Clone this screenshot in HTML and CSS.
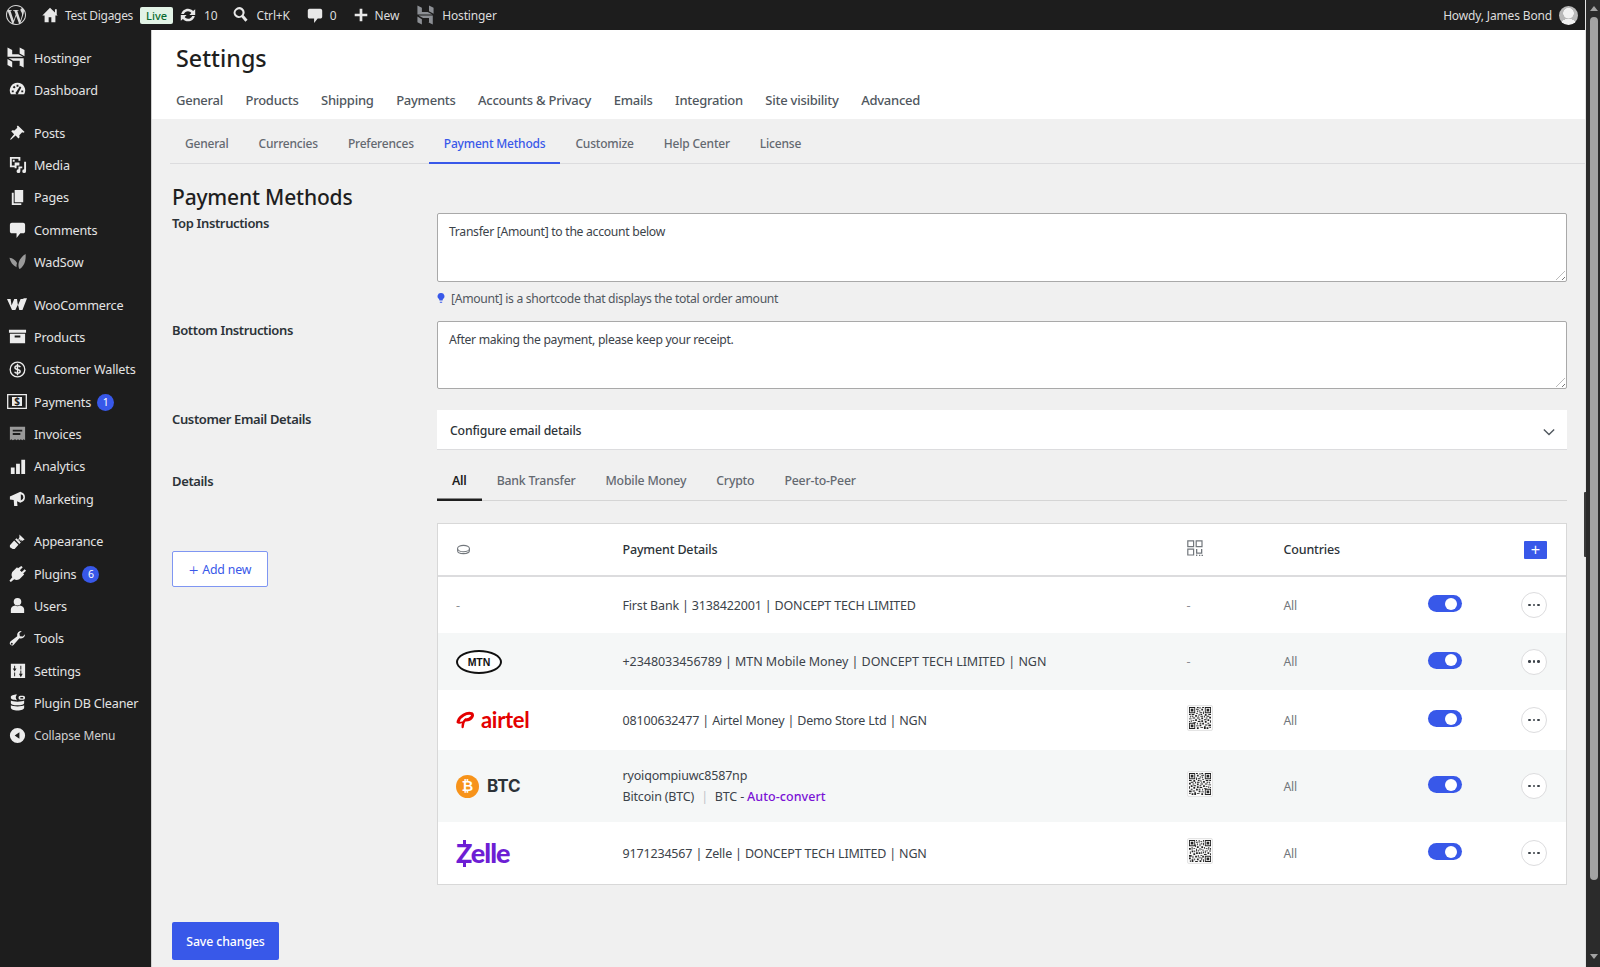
FILE: index.html
```html
<!DOCTYPE html>
<html lang="en">
<head>
    <meta charset="UTF-8">
    <meta name="viewport" content="width=device-width, initial-scale=1.0">
    <title>Settings</title>
    <link rel="stylesheet" href="styles.css">
</head>
<body>
    <svg class="defs" width="0" height="0">
        <symbol id="i-hostinger" viewBox="0 0 24 24"><path d="M16.415 0v7.16l5.785 3.384V2.949L16.415 0ZM1.8 0v11.237h18.815L14.89 8.09l-7.457-.003V2.949L1.8 0Zm14.615 21.05v-5.129l-7.457-.003c.008 0-5.785-3.144-5.785-3.144l18.027.001V24l-5.785-2.95ZM1.8 13.828v7.223l5.634 2.949v-6.78L1.8 13.828Z"/></symbol>
        <symbol id="i-qr" viewBox="0 0 25 25">
            <path fill-rule="evenodd" d="M0 0h7v7H0zM1 1v5h5V1zM2 2h3v3H2zM18 0h7v7h-7zM19 1v5h5V1zM20 2h3v3h-3zM0 18h7v7H0zM1 19v5h5v-5zM2 20h3v3H2z"/>
            <path d="M9 0h2v1H9zM12 0h1v2h-1zM15 0h2v1h-2zM8 2h3v1H8zM14 2h2v2h-2zM9 4h1v2H9zM11 4h2v1h-2zM12 6h3v1h-3zM16 5h1v3h-1zM8 7h2v1H8zM0 8h2v1H0zM3 8h3v1H3zM11 8h1v2h-1zM13 8h2v1h-2zM18 8h2v2h-2zM22 8h3v1h-3zM1 10h1v2H1zM3 10h2v1H3zM7 9h2v2H7zM10 10h1v1h-1zM13 10h3v1h-3zM17 10h1v2h-1zM20 10h3v1h-3zM4 12h3v1H4zM9 12h3v1H9zM14 12h2v2h-2zM19 12h2v1h-2zM23 11h2v2h-2zM0 13h3v1H0zM7 14h2v2H7zM11 14h2v1h-2zM17 14h3v1h-3zM21 14h2v2h-2zM2 15h1v2H2zM4 15h2v1H4zM10 16h3v1h-3zM14 15h2v2h-2zM18 16h2v2h-2zM24 15h1v3h-1zM0 16h1v1H0zM5 17h3v1H5zM9 18h1v2H9zM12 18h2v1h-2zM15 18h2v2h-2zM21 18h2v1h-2zM8 21h3v1H8zM12 20h2v2h-2zM18 20h3v1h-3zM22 20h3v2h-3zM9 23h2v2H9zM13 23h3v1h-3zM17 22h2v3h-2zM20 23h2v2h-2zM23 23h2v1h-2z"/>
        </symbol>
    </svg>

    <div class="window">
        <div class="content">
            <!-- admin bar -->
            <div class="adminbar">
                <div class="bar-left">
                    <svg class="ab-wp" viewBox="0 0 24 24"><path d="M21.469 6.825c.84 1.537 1.318 3.3 1.318 5.175 0 3.979-2.156 7.456-5.363 9.325l3.295-9.527c.615-1.54.82-2.771.82-3.864 0-.405-.026-.78-.07-1.11m-7.981.105c.647-.03 1.232-.105 1.232-.105.582-.075.514-.93-.067-.899 0 0-1.755.135-2.88.135-1.064 0-2.85-.15-2.85-.15-.585-.03-.661.855-.075.885 0 0 .54.061 1.125.09l1.68 4.605-2.37 7.08L5.354 6.9c.649-.03 1.234-.1 1.234-.1.585-.075.516-.93-.065-.896 0 0-1.746.138-2.874.138-.2 0-.438-.008-.69-.015C4.911 3.15 8.235 1.215 12 1.215c2.809 0 5.365 1.072 7.286 2.833-.046-.003-.091-.009-.141-.009-1.06 0-1.812.923-1.812 1.914 0 .89.513 1.643 1.06 2.531.411.72.89 1.643.89 2.977 0 .915-.354 1.994-.821 3.479l-1.075 3.585-3.9-11.61.001.014zM12 22.784c-1.059 0-2.081-.153-3.048-.437l3.237-9.406 3.315 9.087c.024.053.05.101.078.149-1.12.393-2.325.609-3.582.609M1.211 12c0-1.564.336-3.05.935-4.39L7.29 21.709C3.694 19.96 1.212 16.271 1.211 12M12 0C5.385 0 0 5.385 0 12s5.385 12 12 12 12-5.385 12-12S18.615 0 12 0"/></svg>
                    <svg class="ab-icon ab-home" viewBox="0 0 20 20"><path d="M15.500 3.500v3.800L10 2 1.500 10.500H4V18h4.500v-5.500h3V18H16v-7.500h2.500l-1-1V3.500z"/></svg>
                    <span class="ab-site">Test Digages</span>
                    <span class="ab-live">Live</span>
                    <svg class="ab-icon ab-update" viewBox="0 0 20 20"><path d="M10 3c2.300 0 4.300 1 5.600 2.600L18 3.500V10h-6.500l2.200-2.300C12.900 6.600 11.500 5.800 10 5.800c-2.100 0-3.900 1.300-4.600 3.200H2.500C3.300 5.500 6.300 3 10 3zM2 10h6.500l-2.200 2.300c.8 1.100 2.200 1.900 3.700 1.900 2.100 0 3.900-1.300 4.600-3.200h2.900c-.8 3.500-3.800 6-7.500 6-2.300 0-4.300-1-5.600-2.600L2 16.500z"/></svg>
                    <span class="ab-text ab-count">10</span>
                    <svg class="ab-icon ab-search" viewBox="0 0 20 20"><path d="M12.600 2.300a6.300 6.300 0 0 0-8.500 8.900 6.300 6.300 0 0 0 7.600 1.300l4.300 5 2.400-2.100-4.300-5a6.300 6.300 0 0 0-1.500-8.100zM6 5a3.800 3.800 0 1 1 5.500 5.200A3.800 3.800 0 0 1 6 5z"/></svg>
                    <span class="ab-text ab-key">Ctrl+K</span>
                    <svg class="ab-icon ab-comment" viewBox="0 0 20 20"><path d="M4 3h12c1 0 2 1 2 2v7c0 1-1 2-2 2h-3l-4 5v-5H4c-1 0-2-1-2-2V5c0-1 1-2 2-2z"/></svg>
                    <span class="ab-text ab-count2">0</span>
                    <svg class="ab-icon ab-plus" viewBox="0 0 20 20"><path d="M8.500 3h3v5.500H17v3h-5.500V17h-3v-5.500H3v-3h5.500z"/></svg>
                    <span class="ab-text ab-new">New</span>
                    <svg class="ab-host"><use href="#i-hostinger"/></svg>
                    <span class="ab-text">Hostinger</span>
                </div>
                <div class="bar-right">
                    <span class="ab-text">Howdy, James Bond</span>
                    <span class="avatar"></span>
                </div>
            </div>

            <div class="wrap">
                <!-- sidebar -->
                <nav class="sidebar">
                    <div class="menu-group">
                        <a class="menu-item"><svg class="mi mi-host"><use href="#i-hostinger"/></svg>Hostinger</a>
                        <a class="menu-item"><svg class="mi" viewBox="0 0 20 20"><path fill-rule="evenodd" d="M10 3a8 8 0 0 0-7 12h14a8 8 0 0 0-7-12zM9 5h2v2H9zM5 7.500 6.500 6 8 7.500 6.500 9zM4 11h2v2H4zm10 0h2v2h-2zm-1.500-4.500L14 8l-3 5.500a1.500 1.500 0 1 1-2-1.300z"/></svg>Dashboard</a>
                    </div>
                    <div class="menu-group">
                        <a class="menu-item"><svg class="mi" viewBox="0 0 20 20"><path d="m10.400 2.500 7.100 7.100-1.400.7-1.200-.5-3 3 .3 2.200-1.200 1.200-3-3L3 17.500l-.8-.3 4.200-5.400-3-3 1.200-1.200 2.200.3 3-3-.5-1.200z"/></svg>Posts</a>
                        <a class="menu-item"><svg class="mi" viewBox="0 0 20 20"><path fill-rule="evenodd" d="M2 2h11v4h-2V4H4v7h3v2H2zm3 3h2v2H5zm4 3h3v3H9v3H7V8zm8-1h2v10a2 2 0 1 1-2-2zm-6 5h4v2h-2v3a2 2 0 1 1-2-2z"/></svg>Media</a>
                        <a class="menu-item"><svg class="mi" viewBox="0 0 20 20"><path d="M7 2h9v13H7zM4 5h2v11h8v2H4z"/></svg>Pages</a>
                        <a class="menu-item"><svg class="mi" viewBox="0 0 20 20"><path d="M4 3h12c1 0 2 1 2 2v7c0 1-1 2-2 2h-3l-4 5v-5H4c-1 0-2-1-2-2V5c0-1 1-2 2-2z"/></svg>Comments</a>
                        <a class="menu-item"><svg class="mi mi-dim" viewBox="0 0 20 20"><path d="M18.500 2c.6 6-1 13-6.500 16-2-3-1.500-11 6.500-16zM1.500 6C5 6.500 8 8.500 9.500 11.500c-.5 1.500-.7 3-.5 4.500C5 14 2.500 10.500 1.500 6z"/></svg>WadSow</a>
                    </div>
                    <div class="menu-group">
                        <a class="menu-item"><svg class="mi mi-woo" viewBox="0 0 22 14"><path d="M0 1h4l1 7 3-7h3l1 7 3-7h2l2-1h3l-5 13h-3.500L12 7l-2.800 6H5.500z"/></svg>WooCommerce</a>
                        <a class="menu-item"><svg class="mi" viewBox="0 0 20 20"><path fill-rule="evenodd" d="M1 3h18v3H1zm1 4h16v10H2zm5 2v2h6V9z"/></svg>Products</a>
                        <a class="menu-item"><svg class="mi" viewBox="0 0 20 20"><circle cx="10" cy="10" r="7.700" fill="none" stroke="currentColor" stroke-width="1.400"/><path fill="none" stroke="currentColor" stroke-width="1.500" d="M13 7.500C12.500 6.500 11.500 6 10 6 8.500 6 7.300 6.700 7.300 8S8.500 9.700 10 10s2.800 1 2.800 2.200S11.500 14 10 14c-1.500 0-2.600-.6-3-1.600M10 4v12"/></svg>Customer Wallets</a>
                        <a class="menu-item"><svg class="mi mi-pay" viewBox="0 0 20 16"><path fill="none" stroke="currentColor" stroke-width="1.300" d="M.7 1.200h18.600v13.600H.7z"/><path d="M5 3.500h10v9H5z"/><text x="10" y="11.500" class="pay-sign">$</text></svg>Payments<span class="count">1</span></a>
                        <a class="menu-item"><svg class="mi mi-dim" viewBox="0 0 20 20"><path fill-rule="evenodd" d="M2 3h16v14l-1.500-1-1.500 1-1.500-1-1.500 1-1.500-1-1.500 1-1.500-1L5 17l-1.500-1L2 17zm3 3v2h10V6zm0 3.500v2h8v-2z"/></svg>Invoices</a>
                        <a class="menu-item"><svg class="mi" viewBox="0 0 20 20"><path d="M3 11h4v7H3zM8.500 7h4v11h-4zM14 3h4v15h-4z"/></svg>Analytics</a>
                        <a class="menu-item"><svg class="mi" viewBox="0 0 20 20"><path fill-rule="evenodd" d="M2 8l11-5 1 .5A5.500 5.500 0 0 1 14 14l-1 .5L9.500 13l.5 5H6.500L6 11.500 2 11zm11.500-2.500v6.500a3.300 3.300 0 0 0 0-6.500z"/></svg>Marketing</a>
                    </div>
                    <div class="menu-group">
                        <a class="menu-item"><svg class="mi" viewBox="0 0 20 20"><path d="M12 2.500l5.500 5.500-3.500 2 .5-1.500-2.500 1 1-2-2.500 1 1.500-3zM9 6.500 13.500 11 12 12.500 7.500 8zM6.500 9l4.500 4.500L7 18H5l-3-2v-2z"/></svg>Appearance</a>
                        <a class="menu-item"><svg class="mi" viewBox="0 0 20 20"><path d="M14 2l1.500 1.500-3 3 2 2 3-3L19 7l-3 3 1 1-5 5c-2 1-4 1-5.500 0L3 19l-1.500-1.500L4.500 14c-1-1.500-1-3.500 0-5.500l5-5 1 1z"/></svg>Plugins<span class="count">6</span></a>
                        <a class="menu-item"><svg class="mi" viewBox="0 0 20 20"><path d="M10 2a4 4 0 0 1 4 4c0 2-1 4-4 4S6 8 6 6a4 4 0 0 1 4-4zM3 18v-4c0-2 2-3.500 4.500-4 1.500 1 3.500 1 5 0 2.500.5 4.500 2 4.500 4v4z"/></svg>Users</a>
                        <a class="menu-item"><svg class="mi" viewBox="0 0 20 20"><path fill-rule="evenodd" d="M18 5.500a4.500 4.500 0 0 1-6 4.200L6 16.500A2.400 2.400 0 1 1 2.500 13.200L9.700 7.500A4.500 4.500 0 0 1 14.500 2l-2.500 2.500.5 3 3 .5L18 5.500zM4 14.500a1 1 0 1 0 1 1 1 1 0 0 0-1-1z"/></svg>Tools</a>
                        <a class="menu-item"><svg class="mi" viewBox="0 0 20 20"><path fill-rule="evenodd" d="M3 3h15v15H3zm3.500 2v3H5l2 3 2-3H7.500V5zm0 7v4h1v-4zM13 5v4h1V5zm.5 12 2-3.500H14V10h-1v3.500h-1.500z"/></svg>Settings</a>
                        <a class="menu-item"><svg class="mi" viewBox="0 0 20 20"><path fill-rule="evenodd" d="M3 4c0-1.500 3-2.500 6-2.500h.5a4.500 4.500 0 0 0 0 6C6 7.500 3 6.500 3 5zm10-1h3a1.500 1.500 0 0 1 0 4h-3a1.500 1.500 0 0 1 0-4zm0 1.300v1.400h3V4.300zM3 8c2 1.500 12 1.500 14 0v2.500c0 1.500-3 2.500-7 2.500S3 12 3 10.500zm0 5c2 1.500 12 1.500 14 0v2.500C17 17 14 18.500 10 18.500S3 17 3 15.500z"/></svg>Plugin DB Cleaner</a>
                        <a class="menu-item menu-collapse"><svg class="mi" viewBox="0 0 20 20"><path fill-rule="evenodd" d="M10 2a8 8 0 1 1 0 16 8 8 0 0 1 0-16zm2 4.500L7 10l5 3.500z"/></svg>Collapse Menu</a>
                    </div>
                </nav>

                <!-- main area -->
                <main class="main">
                    <header class="page-head">
                        <h1>Settings</h1>
                        <div class="top-nav">
                            <a>General</a><a>Products</a><a>Shipping</a><a>Payments</a><a>Accounts &amp; Privacy</a><a>Emails</a><a>Integration</a><a>Site visibility</a><a>Advanced</a>
                        </div>
                    </header>

                    <div class="sub-tabs">
                        <a>General</a><a>Currencies</a><a>Preferences</a><a class="active">Payment Methods</a><a>Customize</a><a>Help Center</a><a>License</a>
                    </div>

                    <section class="panel">
                        <h2>Payment Methods</h2>

                        <div class="field field-top">
                            <label>Top Instructions</label>
                            <div>
                                <div class="textbox">Transfer [Amount] to the account below<span class="grip"></span></div>
                                <p class="hint"><svg class="bulb" viewBox="0 0 10 14"><path d="M5 0a4.200 4.200 0 0 1 2.500 7.700L7 9.500H3l-.5-1.800A4.200 4.200 0 0 1 5 0zM3.500 11h3v1.500h-3z"/></svg>[Amount] is a shortcode that displays the total order amount</p>
                            </div>
                        </div>

                        <div class="field field-bottom">
                            <label>Bottom Instructions</label>
                            <div class="textbox">After making the payment, please keep your receipt.<span class="grip"></span></div>
                        </div>

                        <div class="field field-email">
                            <label>Customer Email Details</label>
                            <div class="accordion">
                                <span>Configure email details</span>
                                <svg class="chev" viewBox="0 0 14 8"><path d="M1 1l6 6 6-6" fill="none" stroke="currentColor" stroke-width="1.600"/></svg>
                            </div>
                        </div>

                        <div class="field field-details">
                            <div class="details-left">
                                <label>Details</label>
                                <button class="add-new"><span class="plus">+</span>Add new</button>
                            </div>
                            <div>
                                <div class="pill-tabs">
                                    <a class="active">All</a><a>Bank Transfer</a><a>Mobile Money</a><a>Crypto</a><a>Peer-to-Peer</a>
                                </div>

                                <div class="table">
                                    <div class="row row-head">
                                        <div><svg class="coin" viewBox="0 0 16 12"><ellipse cx="8" cy="5" rx="6.500" ry="3.500" fill="none" stroke="currentColor" stroke-width="1.100"/><path d="M1.500 5v2c0 2 2.900 3.500 6.500 3.500s6.500-1.500 6.500-3.500V5" fill="none" stroke="currentColor" stroke-width="1.100"/></svg></div>
                                        <div class="th">Payment Details</div>
                                        <div><svg class="qr-head" viewBox="0 0 16 16"><path fill="none" stroke="currentColor" stroke-width="1.200" d="M.8.800h5.800v5.800H.8zM9.200.8h5.800v5.800H9.200zM.8 9.200h5.800V15H.8z"/><path d="M9 9h1.300v3.500H14V9h1.300v4.700H9zM9 14.500h1.300V16H9zM12 14.800h1.300V16H12zM14.500 14.800H16V16h-1.500z"/></svg></div>
                                        <div class="th">Countries</div>
                                        <div></div>
                                        <div class="cell-end"><button class="head-add">+</button></div>
                                    </div>

                                    <div class="row row-a">
                                        <div class="dash">-</div>
                                        <div>First Bank | 3138422001 | DONCEPT TECH LIMITED</div>
                                        <div class="dash">-</div>
                                        <div class="muted">All</div>
                                        <div><span class="toggle"></span></div>
                                        <div class="cell-end"><button class="more"><i></i><i></i><i></i></button></div>
                                    </div>

                                    <div class="row row-b alt">
                                        <div><span class="logo-mtn">MTN</span></div>
                                        <div>+2348033456789 | MTN Mobile Money | DONCEPT TECH LIMITED | NGN</div>
                                        <div class="dash">-</div>
                                        <div class="muted">All</div>
                                        <div><span class="toggle"></span></div>
                                        <div class="cell-end"><button class="more"><i></i><i></i><i></i></button></div>
                                    </div>

                                    <div class="row row-c">
                                        <div class="logo-airtel">
                                            <svg viewBox="0 0 20 18"><path d="M2.500 10C4 5 11 .8 16.500 2.300c2.500 1.500-.5 6.500-6 6.700" fill="none" stroke="currentColor" stroke-width="3.200" stroke-linecap="round"/><path d="M10 8.500C8 10.500 6.800 13.500 7 16.500" fill="none" stroke="currentColor" stroke-width="2.400" stroke-linecap="round"/><path d="M1 9.500c2 1.700 5 1.500 8 .2l-1 2.300c-3 1.300-6.500 1-7.500-.5z"/></svg>
                                            <span>airtel</span>
                                        </div>
                                        <div>08100632477 | Airtel Money | Demo Store Ltd | NGN</div>
                                        <div><span class="qr-box"><svg class="qr"><use href="#i-qr"/></svg></span></div>
                                        <div class="muted">All</div>
                                        <div><span class="toggle"></span></div>
                                        <div class="cell-end"><button class="more"><i></i><i></i><i></i></button></div>
                                    </div>

                                    <div class="row row-d alt">
                                        <div class="logo-btc"><span class="btc-coin">₿</span><span>BTC</span></div>
                                        <div class="two-lines">
                                            <div>ryoiqompiuwc8587np</div>
                                            <div>Bitcoin (BTC)<span class="sep">|</span>BTC - <a class="convert">Auto-convert</a></div>
                                        </div>
                                        <div><span class="qr-box"><svg class="qr flip-x"><use href="#i-qr"/></svg></span></div>
                                        <div class="muted">All</div>
                                        <div><span class="toggle"></span></div>
                                        <div class="cell-end"><button class="more"><i></i><i></i><i></i></button></div>
                                    </div>

                                    <div class="row row-e">
                                        <div><span class="logo-zelle">Zelle</span></div>
                                        <div>9171234567 | Zelle | DONCEPT TECH LIMITED | NGN</div>
                                        <div><span class="qr-box"><svg class="qr flip-y"><use href="#i-qr"/></svg></span></div>
                                        <div class="muted">All</div>
                                        <div><span class="toggle"></span></div>
                                        <div class="cell-end"><button class="more"><i></i><i></i><i></i></button></div>
                                    </div>
                                </div>
                            </div>
                        </div>

                        <button class="save">Save changes</button>
                    </section>
                </main>
            </div>
        </div>

        <!-- browser scrollbar -->
        <div class="scrollbar">
            <span class="arrow-up"></span>
            <span class="thumb"></span>
            <span class="arrow-down"></span>
            <span class="overlay-thumb"></span>
        </div>
    </div>
</body>
</html>
```

FILE: styles.css
```css
*{
    box-sizing: border-box;
}
html, body{
    margin: 0;
    height: 100%;
    overflow: hidden;
}
body{
    font-family: "Noto Sans", "Open Sans", sans-serif;
    font-size: 13px;
    color: #3c434a;
    background: #f0f0f1;
}
a{
    text-decoration: none;
}
.defs{
    position: absolute;
}
.window{
    display: flex;
    height: 967px;
}
.content{
    flex: 1;
    min-width: 0;
    display: flex;
    flex-direction: column;
}

/* admin bar */
.adminbar{
    height: 30px;
    flex-shrink: 0;
    background: #1d1d1d;
    color: #e6e6e6;
    display: flex;
    justify-content: space-between;
    align-items: center;
    padding: 0 7px 0 6px;
}
.bar-left, .bar-right{
    display: flex;
    align-items: center;
}
.ab-text, .ab-site{
    font-size: 12px;
    letter-spacing: -.15px;
    color: #dcdcdc;
}
.ab-wp{
    width: 20px;
    height: 20px;
    fill: #d8d8d8;
    margin-right: 15px;
}
.ab-icon{
    width: 18px;
    height: 18px;
    fill: #e8e8e8;
}
.ab-site{
    margin-left: 6px;
    letter-spacing: -.3px;
}
.ab-live{
    margin-left: 7px;
    background: #e2f3e6;
    color: #0a6b2f;
    font-size: 11px;
    font-weight: 500;
    line-height: 17px;
    padding: 0 6px;
    border-radius: 2px;
}
.ab-update{
    margin-left: 6px;
}
.ab-count{
    margin-left: 7px;
}
.ab-search{
    margin-left: 14px;
}
.ab-key{
    margin-left: 7px;
}
.ab-comment{
    margin-left: 16px;
}
.ab-count2{
    margin-left: 6px;
}
.ab-plus{
    margin-left: 15px;
}
.ab-new{
    margin-left: 5px;
}
.ab-host{
    width: 19px;
    height: 20px;
    fill: #8c8f94;
    margin: 0 7px 0 17px;
}
.avatar{
    width: 19px;
    height: 19px;
    margin-left: 7px;
    border-radius: 50%;
    background: radial-gradient(circle at 50% 38%, #f2f2f2 0 5px, transparent 5.500px), radial-gradient(ellipse 8px 6px at 50% 100%, #f2f2f2 0 99%, transparent), #b9b9b9;
}

/* sidebar */
.wrap{
    flex: 1;
    display: flex;
    min-height: 0;
}
.sidebar{
    width: 152px;
    flex-shrink: 0;
    background: #1d1d1d;
    border-right: 1px solid #d0d0d0;
    padding-top: 12px;
}
.menu-group{
    margin-bottom: 10.300px;
}
.menu-item{
    display: flex;
    align-items: center;
    height: 32.350px;
    padding-left: 34px;
    position: relative;
    color: #e4e4e4;
    font-size: 12.600px;
    letter-spacing: -.15px;
    white-space: nowrap;
}
.mi{
    position: absolute;
    left: 8px;
    top: 6px;
    width: 19px;
    height: 19px;
    fill: #ececec;
    color: #ececec;
}
.mi-host{
    width: 20px;
    height: 21px;
    top: 5px;
    left: 6px;
}
.mi-dim{
    fill: #9a9a9a;
}
.mi-woo{
    left: 7px;
    width: 20px;
}
.mi-pay{
    left: 7px;
    width: 20px;
}
.pay-sign{
    font-size: 10px;
    font-weight: 700;
    fill: #1d1d1d;
    text-anchor: middle;
}
.count{
    margin-left: 6px;
    width: 17px;
    height: 17px;
    border-radius: 50%;
    background: #3858e9;
    color: #fff;
    font-size: 10.500px;
    display: flex;
    align-items: center;
    justify-content: center;
}
.menu-collapse{
    color: #d0d0d0;
    font-size: 12px;
}

/* main */
.main{
    flex: 1;
    min-width: 0;
    background: #f0f0f0;
}
.page-head{
    height: 89px;
    background: #fff;
    padding: 11px 0 0 24px;
}
.page-head h1{
    margin: 0;
    font-size: 23.300px;
    line-height: 34px;
    font-weight: 500;
    color: #1e1e1e;
}
.top-nav{
    display: flex;
    gap: 22.500px;
    margin-top: 15px;
}
.top-nav a{
    font-size: 13px;
    letter-spacing: -.25px;
    line-height: 20px;
    color: #50575e;
    font-weight: 500;
}
.sub-tabs{
    display: flex;
    margin-left: 18px;
    height: 45px;
    border-bottom: 1.500px solid #dcdcde;
}
.sub-tabs a{
    height: 45px;
    padding: 3px 15px 0;
    display: flex;
    align-items: center;
    font-size: 12px;
    letter-spacing: -.2px;
    color: #646970;
    font-weight: 500;
}
.sub-tabs a.active{
    color: #3858e9;
    box-shadow: inset 0 -2px 0 #3858e9;
}

.panel{
    padding: 18px 17px 0 20px;
}
h2{
    margin: 0;
    font-size: 21px;
    letter-spacing: -.18px;
    line-height: 30px;
    font-weight: 500;
    color: #1e1e1e;
}
.field{
    display: grid;
    grid-template-columns: 265px 1130px;
}
.field label{
    font-size: 13px;
    letter-spacing: -.37px;
    font-weight: 600;
    color: #2c3338;
    line-height: 20px;
}
.field-top{
    margin-top: 1px;
}
.field-bottom{
    margin-top: 13px;
}
.field-bottom label{
    margin-top: -1px;
}
.field-bottom .textbox{
    height: 68px;
}
.field-email{
    margin-top: 21px;
}
.field-email label{
    margin-top: -1px;
}
.field-details{
    margin-top: 10px;
}
.textbox{
    position: relative;
    height: 69px;
    background: #fff;
    border: 1.500px solid #a9a9a9;
    border-radius: 2px;
    padding: 8.500px 11px;
    font-size: 12.200px;
    letter-spacing: -.3px;
    line-height: 18px;
    color: #3c434a;
}
.grip{
    position: absolute;
    right: 1px;
    bottom: 1px;
    width: 9px;
    height: 9px;
    background: repeating-linear-gradient(135deg, transparent 0 2px, #777 2px 3px, transparent 3px 4px);
    clip-path: polygon(100% 0, 100% 100%, 0 100%);
}
.hint{
    margin: 6px 0 0;
    height: 20px;
    display: flex;
    align-items: center;
    font-size: 12.200px;
    letter-spacing: -.33px;
    color: #50575e;
}
.bulb{
    width: 8px;
    height: 11px;
    fill: #3858e9;
    margin-right: 6px;
}
.accordion{
    height: 40px;
    background: #fff;
    border-bottom: 1px solid #dcdcde;
    display: flex;
    align-items: center;
    justify-content: space-between;
    padding: 1px 12px 0 13px;
    font-size: 12.300px;
    letter-spacing: -.2px;
    font-weight: 500;
    color: #2c3338;
}
.chev{
    width: 12px;
    height: 8px;
    color: #50575e;
    margin-top: 4px;
}
.details-left{
    display: flex;
    flex-direction: column;
    align-items: flex-start;
    padding-top: 11px;
}
.add-new{
    margin-top: 60px;
    width: 96px;
    height: 36px;
    background: #fff;
    border: 1.500px solid #7f96f2;
    border-radius: 2px;
    color: #3858e9;
    font-family: inherit;
    font-size: 12.300px;
    letter-spacing: -.15px;
    display: flex;
    align-items: center;
    justify-content: center;
}
.plus{
    font-size: 17px;
    font-weight: 300;
    margin-right: 4px;
    line-height: 1;
}
.pill-tabs{
    display: flex;
    height: 41px;
    border-bottom: 1.500px solid #d5d5d5;
}
.pill-tabs a{
    padding: 0 15px;
    height: 41px;
    display: flex;
    align-items: center;
    font-size: 12.300px;
    letter-spacing: -.2px;
    color: #646970;
    font-weight: 500;
}
.pill-tabs a.active{
    color: #1e1e1e;
    font-weight: 600;
    box-shadow: inset 0 -2.500px 0 #1e1e1e;
}

/* payment table */
.table{
    margin-top: 22px;
    width: 1130px;
    background: #fff;
    border: 1.500px solid #d8d8d8;
}
.row{
    display: grid;
    grid-template-columns: 166.500px 564px 97px 144px 1fr 53px;
    align-items: center;
    padding-right: 19px;
    padding-left: 18px;
    font-size: 12.500px;
    letter-spacing: -.17px;
    color: #3c434a;
}
.row-head{
    height: 53px;
    border-bottom: 2px solid #dcdcde;
}
.row-a{ height: 56px; }
.row-b{ height: 57px; letter-spacing: -.055px; }
.row-c{ height: 60px; }
.row-d{ height: 72px; }
.row-e{ height: 62px; }
.alt{
    background: #f5f7f7;
}
.th{
    font-weight: 500;
    color: #2c3338;
}
.dash{
    color: #8c8f94;
}
.muted{
    color: #72777c;
    font-size: 12.200px;
}
.cell-end{
    display: flex;
    justify-content: flex-end;
}
.coin{
    width: 15px;
    height: 11px;
    color: #72777c;
    display: block;
}
.qr-head{
    width: 16px;
    height: 16px;
    color: #72777c;
    fill: #72777c;
    display: block;
    margin-top: -4px;
}
.head-add{
    width: 23px;
    height: 18px;
    padding: 0;
    border: none;
    border-radius: 1px;
    background: #3858e9;
    color: #fff;
    font-size: 16px;
    line-height: 18px;
}
.toggle{
    display: block;
    width: 34px;
    height: 17px;
    border-radius: 9px;
    background: #3858e9;
    position: relative;
    margin-top: -3px;
}
.toggle::after{
    content: "";
    position: absolute;
    right: 5px;
    top: 2.500px;
    width: 12px;
    height: 12px;
    border-radius: 50%;
    background: #fff;
}
.more{
    width: 26px;
    height: 26px;
    padding: 0;
    border: 1px solid #dcdcde;
    border-radius: 50%;
    background: #fff;
    display: flex;
    align-items: center;
    justify-content: center;
    gap: 2px;
}
.more i{
    width: 2.500px;
    height: 2.500px;
    border-radius: 50%;
    background: #3c434a;
}
.qr-box{
    display: block;
    width: 26px;
    height: 26px;
    padding: 1px;
    background: #fafafa;
    border: 1px solid #e4e4e4;
    border-radius: 2px;
    margin-top: -4px;
}
.qr{
    display: block;
    width: 22px;
    height: 22px;
    fill: #222;
}
.flip-x{
    transform: scaleX(-1);
}
.flip-y{
    transform: rotate(90deg);
}
.two-lines{
    line-height: 21px;
}
.sep{
    color: #c0c4c8;
    margin: 0 7px;
}
.convert{
    color: #7a12d6;
    font-weight: 500;
    letter-spacing: .05px;
}
.logo-mtn{
    display: block;
    width: 46px;
    height: 24px;
    border: 2px solid #111;
    border-radius: 50%;
    background: #fff;
    color: #111;
    font-family: "Liberation Sans", sans-serif;
    font-weight: 700;
    font-size: 10.500px;
    letter-spacing: 0;
    line-height: 20px;
    text-align: center;
}
.logo-airtel{
    display: flex;
    align-items: center;
    gap: 6px;
    color: #e40000;
}
.logo-airtel svg{
    width: 19px;
    height: 18px;
    fill: #e40000;
}
.logo-airtel span{
    font-family: "Lato", sans-serif;
    font-size: 22px;
    line-height: 24px;
    font-weight: 700;
    letter-spacing: -.3px;
}
.logo-btc{
    display: flex;
    align-items: center;
    gap: 8px;
    font-family: "Inter", sans-serif;
    font-size: 17px;
    font-weight: 700;
    letter-spacing: 0;
    color: #2c3338;
}
.btc-coin{
    width: 23px;
    height: 23px;
    border-radius: 50%;
    background: #f7931a;
    color: #fff;
    font-family: "DejaVu Sans", sans-serif;
    font-size: 14px;
    font-weight: 700;
    text-align: center;
    line-height: 23px;
}
/* the bar through the Z is drawn with two small blocks */
.logo-zelle{
    position: relative;
    display: inline-block;
    color: #6d1ed4;
    font-family: "Lato", sans-serif;
    font-size: 27px;
    font-weight: 900;
    letter-spacing: -1px;
    line-height: 30px;
}
.logo-zelle::before, .logo-zelle::after{
    content: "";
    position: absolute;
    left: 6.500px;
    width: 3px;
    height: 4px;
    background: #6d1ed4;
}
.logo-zelle::before{
    top: 2px;
}
.logo-zelle::after{
    bottom: 1px;
}
.save{
    display: block;
    margin-top: 37px;
    width: 107px;
    height: 38px;
    border: none;
    border-radius: 2px;
    background: #3858e9;
    color: #fff;
    font-family: inherit;
    font-size: 12.300px;
    letter-spacing: -.1px;
    font-weight: 500;
}

/* scrollbar */
.scrollbar{
    width: 15px;
    flex-shrink: 0;
    position: relative;
    background: #2b2b2b;
    border-left: 1px solid #e4e4e4;
    display: flex;
    flex-direction: column;
    align-items: center;
}
.arrow-up, .arrow-down{
    width: 0;
    height: 0;
    border-left: 4px solid transparent;
    border-right: 4px solid transparent;
    margin: 6px 0 0 1px;
}
.arrow-up{
    border-bottom: 5px solid #a3a3a3;
}
.arrow-down{
    border-top: 5px solid #a3a3a3;
    margin-top: 74px;
}
.thumb{
    width: 8px;
    height: 863px;
    margin: 6px 0 0 1px;
    background: #a3a3a3;
    border-radius: 4px;
}
.overlay-thumb{
    position: absolute;
    left: -2px;
    top: 492px;
    width: 2px;
    height: 65px;
    background: #3a3a3a;
    border-radius: 1px 0 0 1px;
}
```
